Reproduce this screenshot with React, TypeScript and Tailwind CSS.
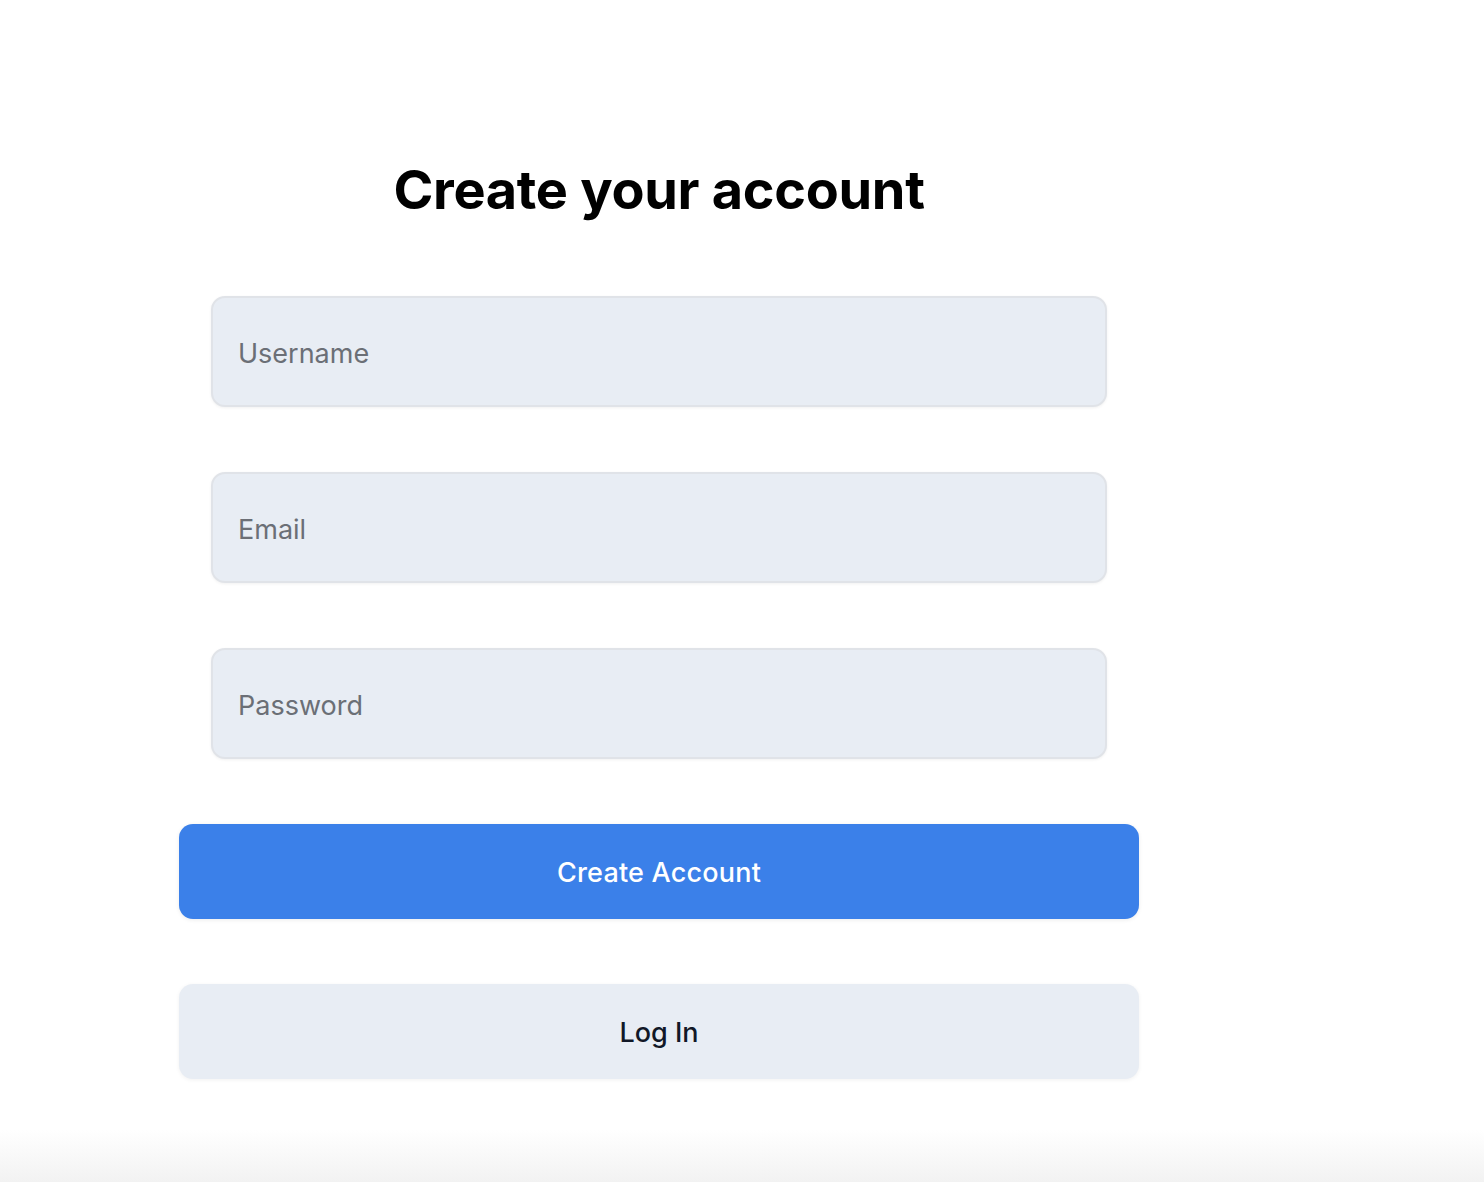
import React from "react";

const fields = [
  { name: "username", placeholder: "Username", type: "text" },
  { name: "email", placeholder: "Email", type: "email" },
  { name: "password", placeholder: "Password", type: "password" },
];

export default function App() {
  return (
    <div
      className="min-h-[1182px] w-full bg-[linear-gradient(to_bottom,#ffffff_1130px,#f2f2f2_1182px)]"
      style={{ fontFamily: "Inter, 'Noto Sans', sans-serif" }}
    >
      <div className="w-[960px] ml-[179px] pt-[152px] flex flex-col">
        <h1 className="text-center text-[54px] leading-[76px] font-bold text-black tracking-[-0.3px]">
          Create your account
        </h1>
        <form className="mt-[68px] flex flex-col gap-[65px]">
          {fields.map((f) => (
            <input
              key={f.name}
              name={f.name}
              type={f.type}
              placeholder={f.placeholder}
              className="mx-[32px] h-[111px] rounded-[14px] border-2 border-[#e0e3e8] bg-[#e8edf4] px-[25px] pt-[4px] text-[27px] text-[#111827] placeholder:text-[#6b6f76] shadow-[0_1px_3px_rgba(0,0,0,0.06)] outline-none"
            />
          ))}
          <button
            type="button"
            className="h-[95px] rounded-[14px] bg-[#3b80e9] pt-[4px] text-[27px] font-medium tracking-[0.2px] text-white shadow-[0_1px_4px_rgba(0,0,0,0.08)]"
          >
            Create Account
          </button>
          <button
            type="button"
            className="h-[95px] rounded-[14px] bg-[#e8edf4] pt-[4px] text-[27px] font-medium text-[#111827] shadow-[0_1px_4px_rgba(0,0,0,0.06)]"
          >
            Log In
          </button>
        </form>
      </div>
    </div>
  );
}
